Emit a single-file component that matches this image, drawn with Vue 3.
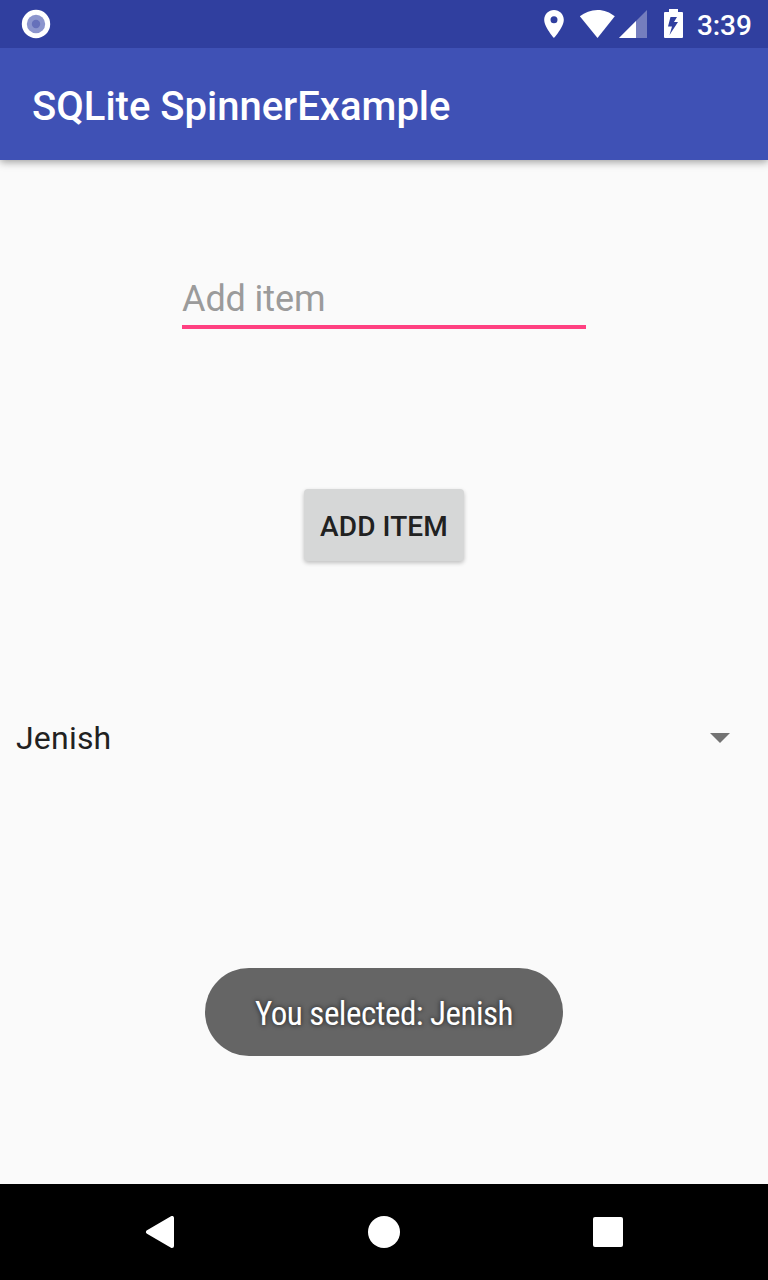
<script setup>
import { ref } from 'vue'

const title = 'SQLite SpinnerExample'
const time = '3:39'
const item = ref('')
const selected = ref('Jenish')
</script>

<template>
  <div class="screen">
    <header class="status-bar">
      <svg class="notification" width="30" height="30" viewBox="0 0 30 30">
        <circle cx="15" cy="15" r="14.2" fill="#fff" />
        <circle cx="15" cy="15" r="9.2" fill="#8c95cd" />
        <circle cx="15" cy="15" r="4.2" fill="#6670ba" />
      </svg>
      <div class="status-icons">
        <svg class="pin" width="20" height="28" viewBox="5 2 14 20">
          <path fill="#fff" d="M12 2C8.13 2 5 5.13 5 9c0 5.25 7 13 7 13s7-7.75 7-13c0-3.87-3.13-7-7-7zm0 9.5a2.5 2.5 0 1 1 0-5 2.5 2.5 0 0 1 0 5z" />
        </svg>
        <svg class="wifi" width="36" height="28" viewBox="0 0 36 28">
          <path fill="#fff" d="M18.500 28 .8 6.300C6 2.300 11.700 0 18.500 0s12.300 2.300 17.300 6.300Z" />
        </svg>
        <svg class="signal" width="28" height="28" viewBox="0 0 28 28">
          <path fill="#757ebe" d="M0 28H28V0Z" />
          <path fill="#fff" d="M0 28H17V11Z" />
        </svg>
        <svg class="battery" width="19" height="29" viewBox="0 0 19 29">
          <path fill="#fff" fill-rule="evenodd" d="M5 0h9v3h4q1 0 1 1v24q0 1-1 1H1q-1 0-1-1V4q0-1 1-1h4ZM6.500 8 4 17.500h4L5.500 26 14 13h-4L13 8Z" />
        </svg>
        <span class="clock">{{ time }}</span>
      </div>
    </header>

    <div class="app-bar">
      <h1 class="title">{{ title }}</h1>
    </div>

    <main class="content">
      <input v-model="item" class="field" type="text" placeholder="Add item" />
      <button class="add" type="button">ADD ITEM</button>
      <div class="spinner">
        <span class="spinner-text">{{ selected }}</span>
        <svg width="20" height="10" viewBox="0 0 20 10"><path fill="#737373" d="M0 0h20L10 10Z" /></svg>
      </div>
      <div class="toast"><span class="toast-text">You selected: {{ selected }}</span></div>
    </main>

    <nav class="nav-bar">
      <svg width="32" height="32" viewBox="0 0 32 32">
        <path fill="#fff" stroke="#fff" stroke-width="4" stroke-linejoin="round" d="M4 16 28 2V30Z" transform="translate(0)" />
      </svg>
      <svg width="32" height="32" viewBox="0 0 32 32"><circle cx="16" cy="16" r="16" fill="#fff" /></svg>
      <svg width="32" height="32" viewBox="0 0 32 32"><rect x="1" y="1" width="30" height="30" rx="2" fill="#fff" /></svg>
    </nav>
  </div>
</template>

<style>
body {
  margin: 0;
}
</style>

<style scoped>
.screen {
  display: flex;
  flex-direction: column;
  width: 768px;
  height: 1280px;
  overflow: hidden;
  background: #fafafa;
  font-family: Roboto, sans-serif;
  color: #212121;
}
svg {
  display: block;
  flex: none;
}
.status-bar {
  position: relative;
  z-index: 1;
  box-sizing: border-box;
  display: flex;
  justify-content: space-between;
  height: 48px;
  padding: 9px 17px 0 21px;
  background: #303f9f;
}
.status-icons {
  display: flex;
  align-items: flex-start;
}
.pin,
.wifi,
.signal {
  margin-top: 1px;
}
.wifi {
  margin-left: 15px;
}
.signal {
  margin-left: 4px;
}
.battery {
  margin-left: 17px;
}
.clock {
  width: 54px;
  margin-left: 14px;
  padding-top: 1px;
  font-size: 28px;
  font-weight: 500;
  line-height: 32px;
  letter-spacing: -0.1px;
  color: #fff;
}
.app-bar {
  position: relative;
  display: flex;
  align-items: center;
  flex: none;
  height: 112px;
  padding-left: 32px;
  background: #3f51b5;
  box-shadow: 0 2px 8px rgba(0, 0, 0, 0.38);
}
.title {
  margin: 6px 0 0;
  font-size: 40px;
  font-weight: 500;
  line-height: 48px;
  color: #fff;
}
.content {
  display: flex;
  flex: 1;
  flex-direction: column;
  align-items: center;
}
.field {
  box-sizing: border-box;
  width: 404px;
  height: 60px;
  margin-top: 109px;
  padding: 3px 0 0;
  border: 0;
  border-bottom: 4px solid #ff4081;
  border-radius: 0;
  outline: 0;
  background: transparent;
  font: 400 36px Roboto, sans-serif;
  letter-spacing: -0.1px;
  color: #212121;
}
.field::placeholder {
  color: #9b9b9b;
  opacity: 1;
}
.add {
  width: 160px;
  height: 72px;
  margin-top: 160px;
  padding: 2px 0 0;
  border: 0;
  border-radius: 4px;
  background: #d6d7d7;
  box-shadow: 0 2px 4px rgba(0, 0, 0, 0.24);
  font: 500 28px Roboto, sans-serif;
  letter-spacing: 0.1px;
  color: #212121;
  white-space: nowrap;
}
.spinner {
  box-sizing: border-box;
  display: flex;
  align-items: center;
  justify-content: space-between;
  width: 100%;
  height: 48px;
  margin-top: 153px;
  padding: 0 38px 0 16px;
  font-size: 32px;
}
.spinner-text {
  letter-spacing: 0.2px;
}
.toast {
  display: flex;
  align-items: center;
  justify-content: center;
  width: 358px;
  height: 88px;
  margin-top: 206px;
  border-radius: 44px;
  background: #656565;
}
.toast-text {
  padding-top: 2px;
  font-family: "Roboto Condensed", Roboto, sans-serif;
  font-size: 33px;
  font-stretch: 75%;
  letter-spacing: -0.5px;
  color: #fff;
  text-shadow: 0 0 5px rgba(0, 0, 0, 0.73);
  white-space: nowrap;
}
.nav-bar {
  display: flex;
  align-items: center;
  justify-content: center;
  flex: none;
  gap: 192px;
  height: 96px;
  background: #000;
}
</style>
